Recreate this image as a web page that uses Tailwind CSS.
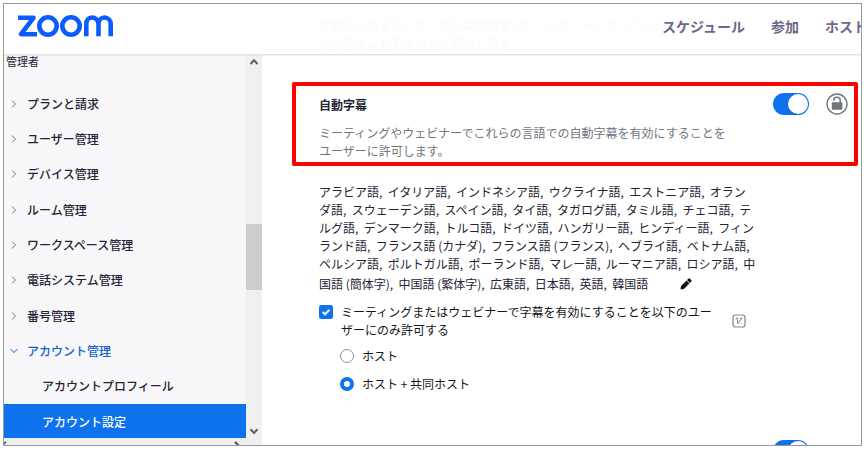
<!DOCTYPE html>
<html lang="ja">

<head>
    <meta charset="UTF-8">
    <meta name="viewport" content="width=device-width, initial-scale=1.0">
    <title>アカウント設定 - Zoom</title>
    <script src="https://cdn.jsdelivr.net/npm/@tailwindcss/browser@4"></script>
</head>

<body class="h-screen bg-white pt-[3px] pr-[5px] pb-2 pl-[3px] font-['Noto_Sans_CJK_JP',sans-serif] text-[12px] leading-[18px] text-[#232333]">
    <div class="flex h-full flex-col overflow-hidden border border-[#999]">
        <!-- ヘッダー -->
        <header class="relative z-10 flex h-[51px] shrink-0 items-center justify-between border-b border-[#e4e4e8] bg-white pb-1.5 shadow-2xs">
            <p class="absolute top-3 left-[315px] whitespace-nowrap text-[#fbfbfb]" aria-hidden="true">字幕を入力すること、または参加者 / サードパーティサービスを追加字幕に割<br>り当てることをホストに許可します</p>
            <a href="#" aria-label="zoom" class="relative ml-[13px]">
                <svg width="97" height="24" viewBox="0 0 97 24" fill="none" stroke="#0b5cff" stroke-width="4.600" stroke-linejoin="round">
                    <path d="M1 3.800H16.500L4 20.200H20" />
                    <circle cx="31" cy="12" r="8.700" />
                    <circle cx="54" cy="12" r="8.700" />
                    <path d="M69.300 22.300V10C69.300 6.200 71.700 3.500 75 3.500S81.500 6.200 81.500 10V22.300M81.500 10C81.500 6.200 84.200 3.500 87.500 3.500S93.700 6.200 93.700 10V22.300" />
                </svg>
            </a>
            <nav class="relative -mr-1.5 flex gap-[26px] text-[14px] font-bold whitespace-nowrap text-[#6e6786]">
                <a href="#">スケジュール</a>
                <a href="#">参加</a>
                <a href="#">ホスト</a>
            </nav>
        </header>

        <div class="flex min-h-0 flex-1">
            <!-- サイドバー -->
            <aside class="flex w-[242px] shrink-0 flex-col bg-[#f7f7fa]">
                <h2 class="h-[31px] pl-[2px] text-[11px] leading-3">管理者</h2>
                <ul class="flex flex-1 flex-col font-medium">
                    <li class="flex flex-1 items-center">
                        <a href="#" class="flex items-center gap-2 pl-[5px]">
                            <svg class="size-[10px] fill-none stroke-[#747487]" viewBox="0 0 10 10"><path d="M3 1.500L6.500 5L3 8.500" /></svg>プランと請求</a>
                    </li>
                    <li class="flex flex-1 items-center">
                        <a href="#" class="flex items-center gap-2 pl-[5px]">
                            <svg class="size-[10px] fill-none stroke-[#747487]" viewBox="0 0 10 10"><path d="M3 1.500L6.500 5L3 8.500" /></svg>ユーザー管理</a>
                    </li>
                    <li class="flex flex-1 items-center">
                        <a href="#" class="flex items-center gap-2 pl-[5px]">
                            <svg class="size-[10px] fill-none stroke-[#747487]" viewBox="0 0 10 10"><path d="M3 1.500L6.500 5L3 8.500" /></svg>デバイス管理</a>
                    </li>
                    <li class="flex flex-1 items-center">
                        <a href="#" class="flex items-center gap-2 pl-[5px]">
                            <svg class="size-[10px] fill-none stroke-[#747487]" viewBox="0 0 10 10"><path d="M3 1.500L6.500 5L3 8.500" /></svg>ルーム管理</a>
                    </li>
                    <li class="flex flex-1 items-center">
                        <a href="#" class="flex items-center gap-2 pl-[5px]">
                            <svg class="size-[10px] fill-none stroke-[#747487]" viewBox="0 0 10 10"><path d="M3 1.500L6.500 5L3 8.500" /></svg>ワークスペース管理</a>
                    </li>
                    <li class="flex flex-1 items-center">
                        <a href="#" class="flex items-center gap-2 pl-[5px]">
                            <svg class="size-[10px] fill-none stroke-[#747487]" viewBox="0 0 10 10"><path d="M3 1.500L6.500 5L3 8.500" /></svg>電話システム管理</a>
                    </li>
                    <li class="flex flex-1 items-center">
                        <a href="#" class="flex items-center gap-2 pl-[5px]">
                            <svg class="size-[10px] fill-none stroke-[#747487]" viewBox="0 0 10 10"><path d="M3 1.500L6.500 5L3 8.500" /></svg>番号管理</a>
                    </li>
                    <li class="flex flex-1 items-center text-[#0e63c9]">
                        <a href="#" class="flex items-center gap-2 pl-[5px]">
                            <svg class="size-[10px] fill-none stroke-[#0e63c9]" viewBox="0 0 10 10"><path d="M1.500 3L5 6.500L8.500 3" /></svg>アカウント管理</a>
                    </li>
                    <li class="flex flex-1 items-center">
                        <a href="#" class="pl-[38px]">アカウントプロフィール</a>
                    </li>
                </ul>
                <a href="#" class="flex h-[34px] items-center bg-[#0e72ed] pt-0.5 pl-[38px] font-medium text-white">アカウント設定</a>
                <div class="flex h-[7px] justify-between overflow-hidden bg-[#f0f0f0] pr-1">
                    <svg class="h-[7px] w-1" viewBox="0 0 4 7" fill="none" stroke="#505050" stroke-width="1.600"><path d="M2 3.800L-2 8" /></svg>
                    <svg class="h-[7px] w-2" viewBox="0 0 8 7" fill="none" stroke="#505050" stroke-width="2"><path d="M1 4L5 8" /></svg>
                </div>
            </aside>
            <!-- スクロールバー -->
            <div class="flex w-4 shrink-0 flex-col items-center bg-[#f0f0f0] pt-0.5 pb-[9px]">
                <svg class="size-[10px]" viewBox="0 0 10 10" fill="none" stroke="#606060" stroke-width="2"><path d="M1.500 7L5 3.300L8.500 7" /></svg>
                <div class="mt-[157px] h-[66px] w-full bg-[#cdcdcd]"></div>
                <svg class="mt-auto size-[10px]" viewBox="0 0 10 10" fill="none" stroke="#606060" stroke-width="2"><path d="M1.500 3.300L5 7L8.500 3.300" /></svg>
            </div>

            <!-- 設定 -->
            <main class="min-w-0 flex-1 overflow-hidden">
                <section class="mt-[27px] mr-[3px] ml-[30px] flex justify-between rounded-xs border-4 border-[#ff0000] pt-[10px] pr-1.5 pb-0.5 pl-[23px]">
                    <div>
                        <h3 class="font-bold"><label for="autoCaption">自動字幕</label></h3>
                        <p class="mt-[10px] text-[#6e7680]">ミーティングやウェビナーでこれらの言語での自動字幕を有効にすることを<br>ユーザーに許可します。</p>
                    </div>
                    <div class="-mt-[3px] flex items-start gap-[17px]">
                        <input id="autoCaption" type="checkbox" role="switch" checked
                            class="h-[22px] w-9 appearance-none rounded-full bg-[#0e72ed] before:mt-px before:ml-[15px] before:block before:size-5 before:rounded-full before:bg-white before:shadow">
                        <button type="button" aria-label="ロック" class="size-[22px]">
                            <svg viewBox="0 0 22 22" fill="none" stroke="#6e7680">
                                <circle cx="11" cy="11" r="10" stroke-width="1.400" />
                                <path d="M7.800 7.800V7.200a3.200 3 0 0 1 6.400 0V10" stroke-width="1.500" />
                                <rect x="5.800" y="9.300" width="10.600" height="7.400" rx="1" fill="#6e7680" stroke="none" />
                            </svg>
                        </button>
                    </div>
                </section>

                <div class="mt-[17px] pl-[57px]">
                    <p class="whitespace-nowrap">アラビア語,&nbsp; イタリア語,&nbsp; インドネシア語,&nbsp; ウクライナ語,&nbsp; エストニア語,&nbsp; オラン<br>
                        ダ語,&nbsp; スウェーデン語,&nbsp; スペイン語,&nbsp; タイ語,&nbsp; タガログ語,&nbsp; タミル語,&nbsp; チェコ語,&nbsp; テ<br>
                        ルグ語,&nbsp; デンマーク語,&nbsp; トルコ語,&nbsp; ドイツ語,&nbsp; ハンガリー語,&nbsp; ヒンディー語,&nbsp; フィン<br>
                        ランド語,&nbsp; フランス語 (カナダ),&nbsp; フランス語 (フランス),&nbsp; ヘブライ語,&nbsp; ベトナム語,<br>
                        ペルシア語,&nbsp; ポルトガル語,&nbsp; ポーランド語,&nbsp; マレー語,&nbsp; ルーマニア語,&nbsp; ロシア語,&nbsp; 中</p>
                    <div class="flex h-[22px] items-center gap-8 whitespace-nowrap">
                        <p>国語 (簡体字),&nbsp; 中国語 (繁体字),&nbsp; 広東語,&nbsp; 日本語,&nbsp; 英語,&nbsp; 韓国語</p>
                        <button type="button" aria-label="編集">
                            <svg class="size-3 fill-[#131619]" viewBox="0 0 12 12"><path d="M.5 11.500L1 8L6.500 2.600L9.400 5.500L4 11ZM7 2.100L8.700.5Q9.200.1 9.700.5L11.500 2.300Q11.900 2.800 11.500 3.300L9.900 5Z" /></svg>
                        </button>
                    </div>

                    <div class="mt-2 flex text-[#131619]">
                        <input id="limitUsers" type="checkbox" checked class="sr-only">
                        <label for="limitUsers" class="flex w-[405px] gap-2 whitespace-nowrap">
                            <svg class="mt-0.5 size-[14px] shrink-0" viewBox="0 0 14 14"><rect width="14" height="14" rx="2.500" fill="#0e72ed" /><path d="M3.600 7L6 9.300L10.500 4.700" fill="none" stroke="#fff" stroke-width="2" /></svg>
                            <span>ミーティングまたはウェビナーで字幕を有効にすることを以下のユー<br>ザーにのみ許可する</span>
                        </label>
                        <button type="button" aria-label="変更済み" class="mt-[11px] ml-2 size-[14px]">
                            <svg viewBox="0 0 14 14" fill="none" stroke="#7c8795"><rect x="1" y="1" width="12" height="12" rx="2.500" stroke-width="1.200" /><path d="M3.500 4.200H6.300M5 4.200L5.800 9.800L9.800 4.200M8.200 4.200H10.800M9.500 9.500H10.300" /></svg>
                        </button>
                    </div>

                    <div class="mt-2 flex flex-col gap-[10px] pl-[21px] text-[#131619]">
                        <label class="flex items-center gap-2">
                            <input type="radio" name="captionRole" class="size-[14px] appearance-none rounded-full border border-[#909096] checked:border-4 checked:border-[#0e72ed]">ホスト</label>
                        <label class="flex items-center gap-2">
                            <input type="radio" name="captionRole" checked class="size-[14px] appearance-none rounded-full border border-[#909096] checked:border-4 checked:border-[#0e72ed]">ホスト + 共同ホスト</label>
                    </div>
                </div>

                <div class="mt-[47px] flex justify-end pr-[52px]">
                    <input type="checkbox" role="switch" checked aria-label="字幕"
                        class="h-[22px] w-9 appearance-none rounded-full bg-[#0e72ed] before:mt-px before:ml-[15px] before:block before:size-5 before:rounded-full before:bg-white before:shadow">
                </div>
            </main>
        </div>
    </div>
</body>

</html>
